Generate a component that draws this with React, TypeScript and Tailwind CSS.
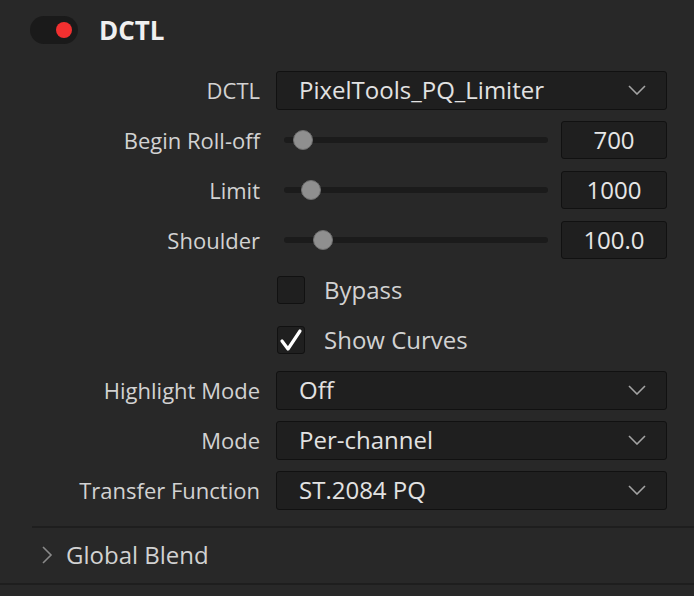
const font = { fontFamily: '"Open Sans", "Noto Sans", sans-serif' };

const Chevron = () => (
  <svg width="18" height="10" viewBox="0 0 18 10" className="shrink-0">
    <polyline points="1,1 9,9 17,1" fill="none" stroke="#a3a3a3" strokeWidth="1.6" />
  </svg>
);

const Label = ({ children }: { children: React.ReactNode }) => (
  <div className="text-right text-[22px] text-[#d2d2d2] leading-none">{children}</div>
);

const Dropdown = ({ value }: { value: string }) => (
  <div className="h-[39px] flex items-center justify-between pl-[22px] pr-[20px] bg-[#1f1f1f] border border-[#111] rounded-[3px]">
    <span className="text-[24px] text-[#e2e2e2] leading-none">{value}</span>
    <Chevron />
  </div>
);

const Slider = ({ pos, value }: { pos: number; value: string }) => (
  <div className="flex items-center">
    <div className="relative ml-[8px] w-[264px] h-[6px] rounded-full bg-[#1b1b1b]">
      <div
        className="absolute top-1/2 w-[20px] h-[20px] -mt-[10px] -ml-[10px] rounded-full bg-[#8f8f8f] border border-[#6f6f6f]"
        style={{ left: pos }}
      />
    </div>
    <div className="ml-[13px] w-[106px] h-[38px] flex items-center justify-center bg-[#1f1f1f] border border-[#111] rounded-[3px] text-[24px] text-[#e6e6e6] leading-none">
      {value}
    </div>
  </div>
);

const Check = ({ checked, label }: { checked?: boolean; label: string }) => (
  <div className="flex items-center">
    <div className="ml-[1px] w-[28px] h-[28px] rounded-[3px] bg-[#1f1f1f] border border-[#111] flex items-center justify-center">
      {checked && (
        <svg width="24" height="24" viewBox="0 0 24 24">
          <path d="M3 13 L9 21 L21 3" fill="none" stroke="#fff" strokeWidth="3.2" strokeLinejoin="round" strokeLinecap="round" />
        </svg>
      )}
    </div>
    <span className="ml-[19px] text-[24px] text-[#d2d2d2] leading-none">{label}</span>
  </div>
);

export default function App() {
  return (
    <div className="w-[694px] h-[596px] bg-[#282828] overflow-hidden" style={font}>
      <div className="h-[60px] flex items-center pl-[30px]">
        <div className="w-[48px] h-[28px] rounded-full bg-[#1a1a1a] flex items-center justify-end pr-[6px]">
          <div className="w-[16px] h-[16px] rounded-full bg-[#f23030]" />
        </div>
        <span className="ml-[21px] text-[26px] font-bold text-[#f0f0f0] leading-none">DCTL</span>
      </div>

      <div className="pt-[5px] grid grid-cols-[260px_391px] gap-x-[16px] auto-rows-[50px] items-center">
        <Label>DCTL</Label>
        <Dropdown value="PixelTools_PQ_Limiter" />
        <Label>Begin Roll-off</Label>
        <Slider pos={19} value="700" />
        <Label>Limit</Label>
        <Slider pos={27} value="1000" />
        <Label>Shoulder</Label>
        <Slider pos={39} value="100.0" />
        <div />
        <Check label="Bypass" />
        <div />
        <Check checked label="Show Curves" />
        <Label>Highlight Mode</Label>
        <Dropdown value="Off" />
        <Label>Mode</Label>
        <Dropdown value="Per-channel" />
        <Label>Transfer Function</Label>
        <Dropdown value="ST.2084 PQ" />
      </div>

      <div className="mt-[11px] ml-[32px] h-[2px] bg-[#1e1e1e]" />
      <div className="h-[55px] flex items-center pl-[41px] pb-[2px]">
        <svg width="12" height="18" viewBox="0 0 12 18">
          <polyline points="2,1 10,9 2,17" fill="none" stroke="#8a8a8a" strokeWidth="1.6" />
        </svg>
        <span className="ml-[13px] text-[24px] text-[#d2d2d2] leading-none">Global Blend</span>
      </div>
      <div className="h-[2px] bg-[#1e1e1e]" />
    </div>
  );
}
